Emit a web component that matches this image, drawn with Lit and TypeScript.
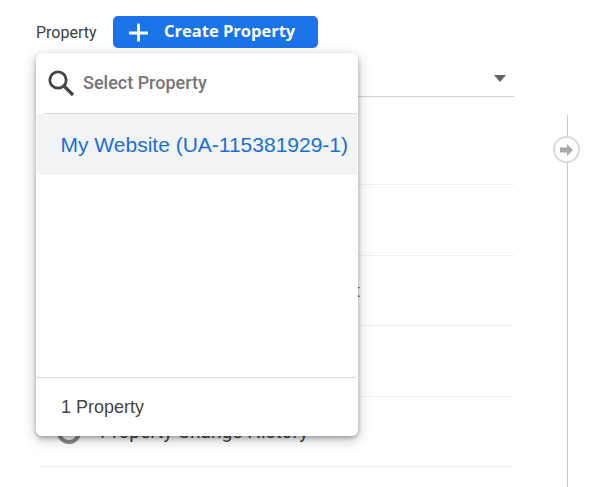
import { LitElement, html, css } from "lit";
import { customElement } from "lit/decorators.js";

const rows: { text: string }[] = [
  { text: "Property Settings" },
  { text: "Setup Assistant" },
  { text: "Property Data Retention Ticket" },
  { text: "Tracking Info" },
  { text: "Property Change History" },
];

@customElement("app-root")
export class AppRoot extends LitElement {
  static styles = css`
    :host {
      display: block;
      width: 609px;
      height: 487px;
      overflow: hidden;
      position: relative;
      background: #fff;
      font-family: Roboto, "Liberation Sans", sans-serif;
    }
    .page {
      display: grid;
      grid-template-columns: 478px 1fr;
      column-gap: 53px;
      padding: 16px 0 0 36px;
      height: 487px;
      box-sizing: border-box;
    }
    .col { display: flex; flex-direction: column; min-width: 0; }
    .head { display: flex; align-items: center; height: 32px; gap: 15px; }
    .label { font-size: 16px; color: #3c4043; width: 62px; white-space: nowrap; }
    .create {
      display: flex;
      align-items: center;
      height: 32px;
      width: 205px;
      box-sizing: border-box;
      padding-left: 15px;
      gap: 15px;
      background: #1a73e8;
      border-radius: 5px;
      color: #fff;
      font-family: "Open Sans", Inter, sans-serif;
      font-weight: 700;
      font-size: 16.5px;
      white-space: nowrap;
    }
    .create svg { display: block; flex: none; }
    .create span { padding-bottom: 3px; }
    .select {
      height: 34px;
      padding: 0 8px 14px 0;
      border-bottom: 1px solid #d4d4d4;
      display: flex;
      align-items: flex-end;
      justify-content: flex-end;
      margin-left: 2px;
    }
    .caret {
      width: 0;
      height: 0;
      border-left: 6px solid transparent;
      border-right: 6px solid transparent;
      border-top: 7px solid #5f6368;
    }
    .row {
      margin-left: 2px;
      height: 69.5px;
      border-bottom: 1px solid #efefef;
      display: flex;
      align-items: center;
      gap: 19px;
      padding-left: 19px;
      font-size: 19.2px;
      color: #3c4043;
      white-space: nowrap;
    }
    .row.first { height: 87.3px; }
    .row .ico {
      width: 24px;
      height: 24px;
      border: 4px solid #8a8a8a;
      border-radius: 50%;
      box-sizing: border-box;
      flex: none;
    }
    .rail { position: relative; margin-top: 99px; width: 1px; background: #c8c8c8; justify-self: start; }
    .node {
      position: absolute;
      left: -14px;
      top: 21px;
      width: 27px;
      height: 27px;
      box-sizing: border-box;
      background: #fff;
      border: 2px solid #dadada;
      border-radius: 50%;
      display: flex;
      align-items: center;
      justify-content: center;
    }
    .node svg { display: block; }
    .menu {
      position: absolute;
      left: 36px;
      top: 53px;
      width: 322px;
      height: 383px;
      background: #fff;
      border-radius: 6px;
      box-shadow: 0 2px 4px rgba(0,0,0,.28), 0 4px 14px rgba(0,0,0,.22);
      display: flex;
      flex-direction: column;
      overflow: hidden;
    }
    .search {
      height: 61px;
      margin-left: 8px;
      margin-right: 1px;
      border-bottom: 1px solid #dcdcdc;
      display: flex;
      align-items: center;
      gap: 7px;
      padding-left: 2px;
      flex: none;
      box-sizing: border-box;
      color: #757575;
      font-weight: 500;
      font-size: 18px;
      white-space: nowrap;
    }
    .search svg { display: block; flex: none; }
    .search span { padding-bottom: 2px; }
    .item {
      margin: 0 1px;
      height: 61px;
      background: #f1f3f4;
      display: flex;
      align-items: center;
      padding-left: 23.5px;
      color: #1a6fd6;
      font-family: "Liberation Sans", Arial, sans-serif;
      font-size: 21px;
      white-space: nowrap;
      flex: none;
    }
    .spacer { flex: 1; }
    .foot {
      height: 59px;
      box-sizing: border-box;
      border-top: 1px solid #d9d9d9;
      margin-right: 2px;
      display: flex;
      align-items: center;
      padding-left: 25px;
      color: #444;
      font-family: "Liberation Sans", Arial, sans-serif;
      font-size: 18px;
      flex: none;
    }
  `;

  render() {
    return html`
      <div class="page">
        <div class="col">
          <div class="head">
            <span class="label">Property</span>
            <div class="create">
              <svg width="21" height="20" viewBox="0 0 21 20"><path d="M10.5 1.5v18M1 11h19" stroke="#fff" stroke-width="2.8" fill="none"/></svg>
              <span>Create Property</span>
            </div>
          </div>
          <div class="select"><span class="caret"></span></div>
          ${rows.map(
            (r, i) => html`<div class="row ${i === 0 ? "first" : ""}"><span class="ico"></span><span>${r.text}</span></div>`
          )}
        </div>
        <div class="rail">
          <div class="node">
            <svg width="13" height="12" viewBox="0 0 13 12"><path d="M0 3.5h7V0l6 6-6 6V8.5H0z" fill="#a8a8a8"/></svg>
          </div>
        </div>
      </div>
      <div class="menu">
        <div class="search">
          <svg width="30" height="30" viewBox="0 0 30 30"><circle cx="12" cy="12" r="8.2" fill="none" stroke="#444" stroke-width="2.8"/><path d="M18 18l9 9" stroke="#444" stroke-width="3.2" fill="none"/></svg>
          <span>Select Property</span>
        </div>
        <div class="item">My Website (UA-115381929-1)</div>
        <div class="spacer"></div>
        <div class="foot">1 Property</div>
      </div>
    `;
  }
}
